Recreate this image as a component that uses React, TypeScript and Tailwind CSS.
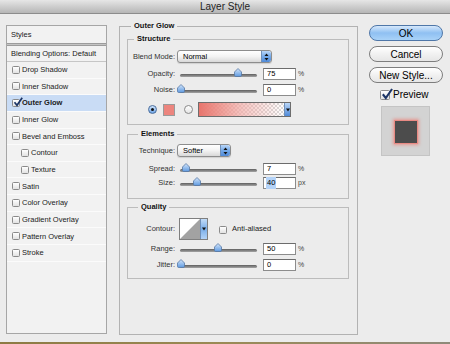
import React from "react";

const rows = [
	{ label: "Drop Shadow" },
	{ label: "Inner Shadow" },
	{ label: "Outer Glow", checked: true, active: true },
	{ label: "Inner Glow" },
	{ label: "Bevel and Emboss" },
	{ label: "Contour", sub: true },
	{ label: "Texture", sub: true },
	{ label: "Satin" },
	{ label: "Color Overlay" },
	{ label: "Gradient Overlay" },
	{ label: "Pattern Overlay" },
	{ label: "Stroke" },
];

function Check({ checked, big }: { checked?: boolean; big?: boolean }) {
	return (
		<span
			className={`relative inline-block shrink-0 rounded-[1.5px] border border-[#8a8a8a] bg-gradient-to-b from-white to-[#e2e2e2] ${
				big ? "w-[10px] h-[10px]" : "w-[8px] h-[8px]"
			}`}
		>
			{checked && (
				<svg
					width={big ? 12 : 10}
					height={big ? 12 : 10}
					viewBox="0 0 10 10"
					className="absolute -top-[3px] left-0"
				>
					<path d="M1.5 5.2 L4 8.3 L9.2 0.8" fill="none" stroke="#1c3566" strokeWidth="1.7" />
				</svg>
			)}
		</span>
	);
}

function Label({ children }: { children: React.ReactNode }) {
	return <span className="w-[47px] shrink-0 text-right text-[7.5px] text-[#333]">{children}</span>;
}

function Slider({ pos }: { pos: number }) {
	return (
		<div className="relative ml-[5px] h-[12px] w-[77px] shrink-0">
			<div className="absolute left-0 right-0 top-[6px] h-[3px] rounded-full bg-gradient-to-b from-[#5f5f5f] to-[#a5a5a5]" />
			<svg width="8" height="9" viewBox="0 0 8 9" className="absolute top-[0px]" style={{ left: pos - 4 }}>
				<defs>
					<linearGradient id="kn" x1="0" y1="0" x2="0" y2="1">
						<stop offset="0" stopColor="#d4e6fb" />
						<stop offset="1" stopColor="#5f9ae0" />
					</linearGradient>
				</defs>
				<path d="M4 0.5 L7.5 4 V7.3 Q7.5 8.5 6.3 8.5 H1.7 Q0.5 8.5 0.5 7.3 V4 Z" fill="url(#kn)" stroke="#5577a3" strokeWidth="0.8" />
			</svg>
		</div>
	);
}

function NumInput({ value, selected }: { value: string; selected?: boolean }) {
	return (
		<div className="ml-[6px] flex h-[12px] w-[33px] shrink-0 items-center border border-[#8c8c8c] border-t-[#6c6c6c] bg-white pl-[2px] text-[7.5px] text-black">
			<span className={selected ? "bg-[#b4d3f8] px-[1px]" : "px-[1px]"}>{value}</span>
		</div>
	);
}

function Unit({ children }: { children: React.ReactNode }) {
	return <span className="ml-[2px] text-[7px] text-[#444]">{children}</span>;
}

function SliderRow({ label, pos, value, unit, selected, className = "" }: { label: string; pos: number; value: string; unit: string; selected?: boolean; className?: string }) {
	return (
		<div className={`flex h-[12px] items-center ${className}`}>
			<Label>{label}</Label>
			<Slider pos={pos} />
			<NumInput value={value} selected={selected} />
			<Unit>{unit}</Unit>
		</div>
	);
}

function Stepper() {
	return (
		<span className="flex h-full w-[10px] items-center justify-center rounded-r-[2px] border-l border-[#6f8fb8] bg-gradient-to-b from-[#b9d6f7] via-[#74a9e8] to-[#4f8ad8]">
			<svg width="5" height="8" viewBox="0 0 5 8">
				<path d="M2.5 0.5 L4.5 3 H0.5 Z M2.5 7.5 L4.5 5 H0.5 Z" fill="#111" />
			</svg>
		</span>
	);
}

function Dropdown({ text, w }: { text: string; w: string }) {
	return (
		<div className={`ml-[2px] flex h-[13px] ${w} items-center overflow-hidden rounded-[3px] border border-[#8d8d8d] bg-gradient-to-b from-white via-[#f3f3f3] to-[#d9d9d9] shadow-[0_1px_1px_rgba(0,0,0,0.12)]`}>
			<span className="flex-1 pl-[5px] text-[7.5px] text-black">{text}</span>
			<Stepper />
		</div>
	);
}

function DownArrow() {
	return (
		<svg width="4" height="4" viewBox="0 0 4 4">
			<path d="M0 0.5 H4 L2 3.5 Z" fill="#111" />
		</svg>
	);
}

function Group({ title, left, className = "", children }: { title: string; left: string; className?: string; children: React.ReactNode }) {
	return (
		<div className={`relative ml-[7px] w-[222px] border border-[#bcbcbc] ${className}`}>
			<span className={`absolute top-[-6px] ${left} bg-[#ececec] px-[3px] text-[7.5px] font-bold leading-[10px] text-[#111]`}>{title}</span>
			{children}
		</div>
	);
}

function Radio({ on }: { on?: boolean }) {
	return (
		<span
			className={`flex h-[9px] w-[9px] shrink-0 items-center justify-center rounded-full border ${
				on ? "border-[#4a6d9c] bg-gradient-to-b from-[#cfe3fa] to-[#6ea5e6]" : "border-[#8a8a8a] bg-gradient-to-b from-white to-[#e4e4e4]"
			}`}
		>
			{on && <span className="h-[3px] w-[3px] rounded-full bg-[#111]" />}
		</span>
	);
}

function Button({ children, primary }: { children: React.ReactNode; primary?: boolean }) {
	return (
		<div
			className={`flex h-[16px] w-[74px] items-center justify-center rounded-full border text-[10px] text-black ${
				primary
					? "border-[#4f77a8] bg-gradient-to-b from-[#d6e8fb] via-[#8fc0f2] to-[#a9d2f8]"
					: "border-[#7d7d7d] bg-gradient-to-b from-white via-[#f1f1f1] to-[#e6e6e6]"
			}`}
		>
			{children}
		</div>
	);
}

export default function App() {
	return (
		<div className="flex h-[344px] w-[450px] flex-col overflow-hidden bg-[#ececec] font-['Liberation_Sans',Arial,sans-serif]">
			<div className="flex h-[14px] shrink-0 items-center justify-center border-b border-[#8c8c8c] bg-gradient-to-b from-[#e6e6e6] to-[#b6b6b6] text-[10px] text-[#1e1e1e]">
				Layer Style
			</div>

			<div className="flex flex-1 pl-[6px] pt-[11px]">
				{/* styles list */}
				<div className="flex h-[309px] w-[101px] shrink-0 flex-col border border-[#a6a6a6] bg-[#f2f2f2] text-[7.5px] text-[#1a1a1a]">
					<div className="flex h-[17px] items-center pl-[4px]">Styles</div>
					<div className="h-[3px] border-y border-[#9c9c9c] bg-[#c4c4c4]" />
					<div className="flex h-[16px] items-center border-b border-[#c6c6c6] pl-[4px]">Blending Options: Default</div>
					{rows.map((r) => (
						<div
							key={r.label}
							className={`flex h-[16.65px] items-center gap-[2px] border-b border-[#fbfbfb] ${r.sub ? "pl-[14px]" : "pl-[5px]"} ${
								r.active ? "bg-[#c9dcf5] font-bold" : ""
							}`}
						>
							<Check checked={r.checked} />
							<span>{r.label}</span>
						</div>
					))}
				</div>

				{/* outer glow */}
				<div className="relative ml-[12px] mt-[1px] h-[309px] w-[239px] shrink-0 border border-[#b2b2b2]">
					<span className="absolute left-[11px] top-[-6px] bg-[#ececec] px-[3px] text-[7.5px] font-bold leading-[10px] text-[#111]">Outer Glow</span>

					<Group title="Structure" left="left-[6px]" className="mt-[12px] h-[86px] pt-[10px]">
						<div className="flex h-[13px] items-center">
							<Label>Blend Mode:</Label>
							<Dropdown text="Normal" w="w-[95px]" />
						</div>
						<SliderRow label="Opacity:" pos={58} value="75" unit="%" className="mt-[5px]" />
						<SliderRow label="Noise:" pos={1} value="0" unit="%" className="mt-[4px]" />
						<div className="mt-[6px] flex h-[15px] items-center">
							<span className="ml-[20px]">
								<Radio on />
							</span>
							<span className="ml-[6px] h-[12px] w-[12px] border border-[#9a9a9a] bg-[#ec857e]" />
							<span className="ml-[9px]">
								<Radio />
							</span>
							<div className="ml-[5px] flex h-[15px] w-[93px] border border-[#6d6d6d]">
								<div className="h-full flex-1 bg-[repeating-conic-gradient(#d9d9d9_0%_25%,#ffffff_0%_50%)] bg-[length:4px_4px]">
									<div className="h-full w-full bg-gradient-to-r from-[#e8756d] via-[#f1aaa5]/70 to-transparent" />
								</div>
								<span className="flex w-[6px] items-center justify-center border-l border-[#6f8fb8] bg-gradient-to-b from-[#b9d6f7] to-[#4f8ad8]">
									<DownArrow />
								</span>
							</div>
						</div>
					</Group>

					<Group title="Elements" left="left-[10px]" className="mt-[9px] h-[65px] pt-[9px]">
						<div className="flex h-[13px] items-center">
							<Label>Technique:</Label>
							<Dropdown text="Softer" w="w-[54px]" />
						</div>
						<SliderRow label="Spread:" pos={6} value="7" unit="%" className="mt-[6px]" />
						<SliderRow label="Size:" pos={17} value="40" unit="px" selected className="mt-[2px]" />
					</Group>

					<Group title="Quality" left="left-[10px]" className="mt-[8px] h-[72px] pt-[10px]">
						<div className="flex h-[22px] items-center">
							<Label>Contour:</Label>
							<div className="ml-[4px] flex h-[22px] w-[29px] border border-[#7f7f7f] bg-white">
								<svg width="20" height="20" viewBox="0 0 20 20" className="shrink-0">
									<polygon points="0,20 20,0 20,20" fill="#a2a2a2" />
								</svg>
								<span className="flex flex-1 items-center justify-center border-l border-[#6f8fb8] bg-gradient-to-b from-[#c3dcf8] via-[#7aaee9] to-[#b3d3f7]">
									<DownArrow />
								</span>
							</div>
							<span className="ml-[11px]">
								<Check />
							</span>
							<span className="ml-[5px] text-[7.5px] text-[#222]">Anti-aliased</span>
						</div>
						<SliderRow label="Range:" pos={38} value="50" unit="%" className="mt-[3px]" />
						<SliderRow label="Jitter:" pos={1} value="0" unit="%" className="mt-[4px]" />
					</Group>
				</div>

				{/* buttons */}
				<div className="ml-[11px] flex w-[74px] shrink-0 flex-col">
					<Button primary>OK</Button>
					<div className="mt-[5px]">
						<Button>Cancel</Button>
					</div>
					<div className="mt-[5px]">
						<Button>New Style...</Button>
					</div>
					<div className="ml-[11px] mt-[6px] flex h-[11px] items-center gap-[3px] text-[10px] text-black">
						<Check checked big />
						<span>Preview</span>
					</div>
					<div className="ml-[12px] mt-[6px] flex h-[50px] w-[49px] items-center justify-center border border-[#c4c4c4] bg-[#d3d3d3] pl-[1px] pt-[2px]">
						<div className="h-[24px] w-[24px] border border-[#e98a84] bg-[#4c4c4c] shadow-[0_0_3px_1px_rgba(240,110,100,0.6)]" />
					</div>
				</div>
			</div>

			<div className="h-[2px] shrink-0 bg-gradient-to-r from-[#8d7a43] via-[#9b8a55] to-[#8f8a7a]" />
		</div>
	);
}
